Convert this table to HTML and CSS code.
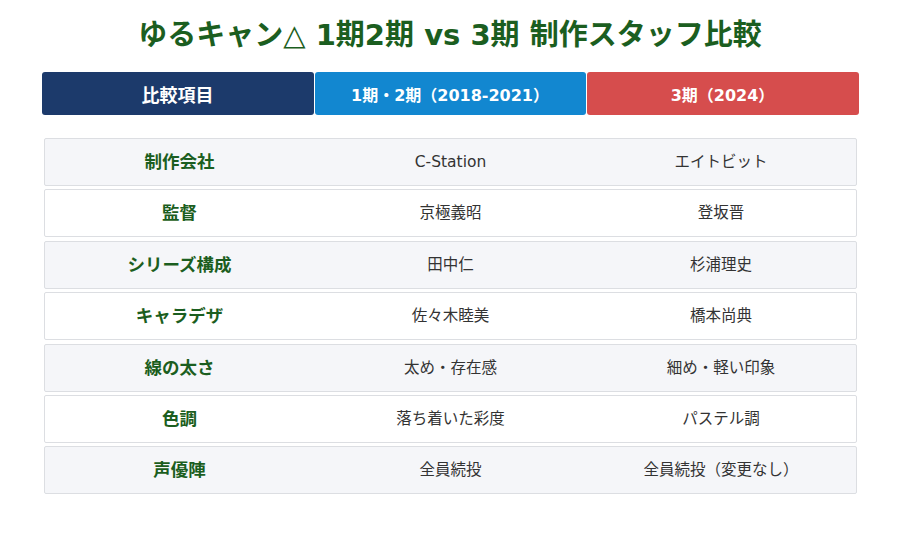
FILE: index.html
```html
<!DOCTYPE html>
<html lang="ja">
<head>
<meta charset="utf-8">
<link rel="stylesheet" href="styles.css">
</head>
<body>
<div class="page">
  <h1 class="title">ゆるキャン△ 1期2期 vs 3期 制作スタッフ比較</h1>
  <div class="head">
    <div class="hcell h-item">比較項目</div>
    <div class="hcell h-old">1期・2期（2018-2021）</div>
    <div class="hcell h-new">3期（2024）</div>
  </div>
  <div class="rows">
    <div class="row alt"><div class="c key">制作会社</div><div class="c">C-Station</div><div class="c">エイトビット</div></div>
    <div class="row"><div class="c key">監督</div><div class="c">京極義昭</div><div class="c">登坂晋</div></div>
    <div class="row alt"><div class="c key">シリーズ構成</div><div class="c">田中仁</div><div class="c">杉浦理史</div></div>
    <div class="row"><div class="c key">キャラデザ</div><div class="c">佐々木睦美</div><div class="c">橋本尚典</div></div>
    <div class="row alt"><div class="c key">線の太さ</div><div class="c">太め・存在感</div><div class="c">細め・軽い印象</div></div>
    <div class="row"><div class="c key">色調</div><div class="c">落ち着いた彩度</div><div class="c">パステル調</div></div>
    <div class="row alt"><div class="c key">声優陣</div><div class="c">全員続投</div><div class="c">全員続投（変更なし）</div></div>
  </div>
</div>
</body>
</html>
```
FILE: styles.css
```css
html, body {
  margin: 0;
  padding: 0;
  background: #ffffff;
}
body {
  font-family: "DejaVu Sans", "Noto Sans CJK JP", sans-serif;
  color: #333333;
}
.page {
  width: 817px;
  margin: 0 auto;
  padding-top: 15px;
}
.title {
  margin: 0;
  height: 40px;
  line-height: 40px;
  font-size: 29px;
  font-weight: 700;
  color: #1b5e20;
  text-align: center;
}
.head {
  margin-top: 17px;
  display: grid;
  grid-template-columns: 272px 271px 272px;
  column-gap: 1px;
  height: 43px;
}
.hcell {
  display: flex;
  align-items: center;
  justify-content: center;
  color: #ffffff;
  font-weight: 700;
  font-size: 16px;
  border-radius: 3px;
}
.h-item { background: #1c3a6b; font-size: 18px; }
.h-old { background: #1287d0; }
.h-new { background: #d64d4d; }
.rows {
  margin: 23px 2px 0;
  display: flex;
  flex-direction: column;
  gap: 3.4px;
}
.row {
  height: 48px;
  box-sizing: border-box;
  border: 1px solid #dcdee2;
  border-radius: 2px;
  background: #ffffff;
  display: grid;
  grid-template-columns: 270px 272px 269px;
}
.row.alt { background: #f5f6f9; }
.c {
  display: flex;
  align-items: center;
  justify-content: center;
  font-size: 15.5px;
  line-height: 20px;
  color: #333333;
}
.c.key {
  font-size: 17.5px;
  font-weight: 700;
  color: #1b5e20;
}
```
